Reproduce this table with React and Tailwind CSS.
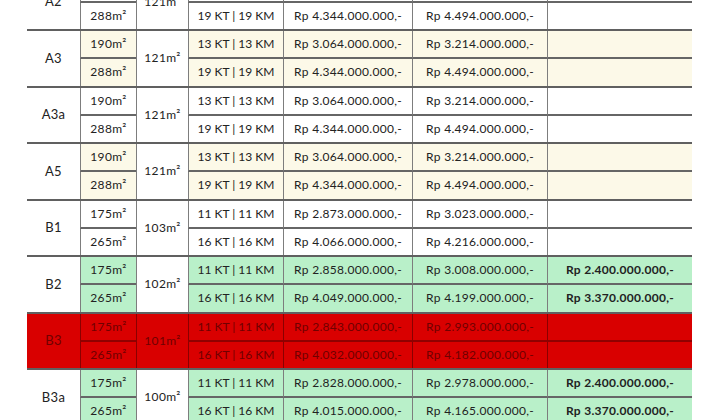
const groups = [
	{
		name: "A2",
		lb: "121m²",
		tone: "white",
		rows: [
			["190m²", "13 KT | 13 KM", "Rp 3.064.000.000,-", "Rp 3.214.000.000,-", ""],
			["288m²", "19 KT | 19 KM", "Rp 4.344.000.000,-", "Rp 4.494.000.000,-", ""],
		],
	},
	{
		name: "A3",
		lb: "121m²",
		tone: "cream",
		rows: [
			["190m²", "13 KT | 13 KM", "Rp 3.064.000.000,-", "Rp 3.214.000.000,-", ""],
			["288m²", "19 KT | 19 KM", "Rp 4.344.000.000,-", "Rp 4.494.000.000,-", ""],
		],
	},
	{
		name: "A3a",
		lb: "121m²",
		tone: "white",
		rows: [
			["190m²", "13 KT | 13 KM", "Rp 3.064.000.000,-", "Rp 3.214.000.000,-", ""],
			["288m²", "19 KT | 19 KM", "Rp 4.344.000.000,-", "Rp 4.494.000.000,-", ""],
		],
	},
	{
		name: "A5",
		lb: "121m²",
		tone: "cream",
		rows: [
			["190m²", "13 KT | 13 KM", "Rp 3.064.000.000,-", "Rp 3.214.000.000,-", ""],
			["288m²", "19 KT | 19 KM", "Rp 4.344.000.000,-", "Rp 4.494.000.000,-", ""],
		],
	},
	{
		name: "B1",
		lb: "103m²",
		tone: "white",
		rows: [
			["175m²", "11 KT | 11 KM", "Rp 2.873.000.000,-", "Rp 3.023.000.000,-", ""],
			["265m²", "16 KT | 16 KM", "Rp 4.066.000.000,-", "Rp 4.216.000.000,-", ""],
		],
	},
	{
		name: "B2",
		lb: "102m²",
		tone: "green",
		rows: [
			["175m²", "11 KT | 11 KM", "Rp 2.858.000.000,-", "Rp 3.008.000.000,-", "Rp 2.400.000.000,-"],
			["265m²", "16 KT | 16 KM", "Rp 4.049.000.000,-", "Rp 4.199.000.000,-", "Rp 3.370.000.000,-"],
		],
	},
	{
		name: "B3",
		lb: "101m²",
		tone: "red",
		rows: [
			["175m²", "11 KT | 11 KM", "Rp 2.843.000.000,-", "Rp 2.993.000.000,-", ""],
			["265m²", "16 KT | 16 KM", "Rp 4.032.000.000,-", "Rp 4.182.000.000,-", ""],
		],
	},
	{
		name: "B3a",
		lb: "100m²",
		tone: "green",
		rows: [
			["175m²", "11 KT | 11 KM", "Rp 2.828.000.000,-", "Rp 2.978.000.000,-", "Rp 2.400.000.000,-"],
			["265m²", "16 KT | 16 KM", "Rp 4.015.000.000,-", "Rp 4.165.000.000,-", "Rp 3.370.000.000,-"],
		],
	},
];

const toneBg = {
	white: "bg-white",
	cream: "bg-[#fcf9e8]",
	green: "bg-[#b9f0c9]",
	red: "bg-[#d90000]",
};

const Group = ({ g }) => {
	const red = g.tone === "red";
	const fill = toneBg[g.tone];
	const plain = red ? "bg-[#d90000]" : "bg-white";
	const vline = red ? "border-l border-[#8a0000]" : "border-l border-[#7d7d7d]";
	const hline = red ? "border-b-2 border-b-[#900000]" : "border-b-2 border-b-[#666]";
	const cell = "flex items-center justify-center whitespace-nowrap";
	const kt = "tracking-normal";
	const [r1, r2] = g.rows;

	return (
		<div
			className={`grid grid-cols-[53px_56px_52px_95px_129px_135px_145px] grid-rows-[28px_26.5px] border-t-2 border-[#606060] ${
				red ? "text-[#700000]" : "text-[#222]"
			}`}
		>
			<div className={`${cell} row-span-2 text-[13px] ${plain}`}>{g.name}</div>
			<div className={`${cell} ${vline} ${hline} ${fill}`}>{r1[0]}</div>
			<div className={`${cell} row-span-2 ${vline} ${plain}`}>{g.lb}</div>
			<div className={`${cell} ${kt} ${vline} ${hline} ${fill}`}>{r1[1]}</div>
			<div className={`${cell} ${vline} ${hline} ${fill}`}>{r1[2]}</div>
			<div className={`${cell} ${vline} ${hline} ${fill}`}>{r1[3]}</div>
			<div className={`${cell} ${vline} ${hline} ${fill} font-bold`}>{r1[4]}</div>
			<div className={`${cell} ${vline} ${fill}`}>{r2[0]}</div>
			<div className={`${cell} ${kt} ${vline} ${fill}`}>{r2[1]}</div>
			<div className={`${cell} ${vline} ${fill}`}>{r2[2]}</div>
			<div className={`${cell} ${vline} ${fill}`}>{r2[3]}</div>
			<div className={`${cell} ${vline} ${fill} font-bold`}>{r2[4]}</div>
		</div>
	);
};

const App = () => {
	return (
		<div className="w-[720px] h-[420px] overflow-hidden bg-white font-['Lato','Liberation_Sans',sans-serif] text-[12px] tracking-[0.3px]">
			<div className="ml-[27px] mt-[-27.5px] w-[665px]">
				{groups.map((g) => (
					<Group key={g.name} g={g} />
				))}
			</div>
		</div>
	);
};

export default App;
